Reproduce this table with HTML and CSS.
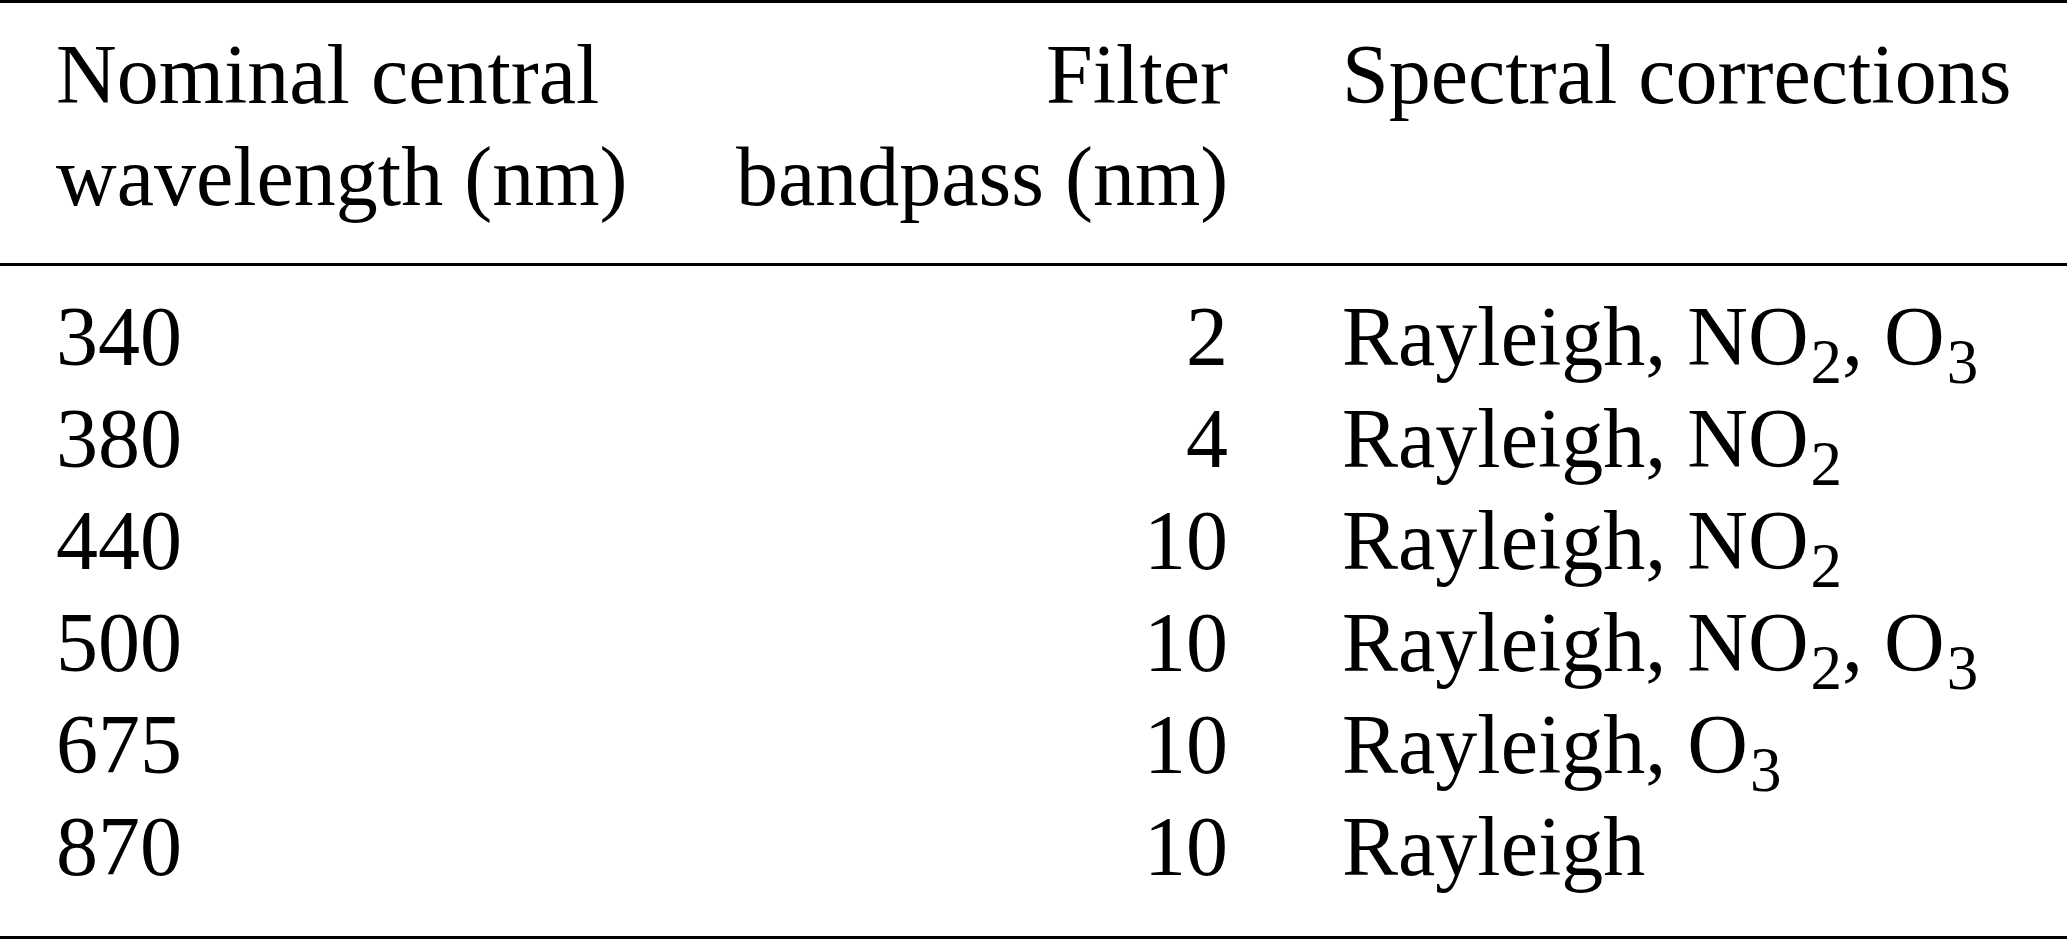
FILE: index.html
```html
<!DOCTYPE html>
<html lang="en">
<head>
  <meta charset="UTF-8">
  <meta name="viewport" content="width=device-width, initial-scale=1.0">
  <title>Sun photometer channels</title>
  <link rel="stylesheet" href="styles.css">
</head>
<body>

  <table class="channels">
    <colgroup>
      <col class="col-wave">
      <col class="col-band">
      <col class="col-corr">
    </colgroup>
    <thead>
      <tr>
        <th>Nominal central<br>wavelength (nm)</th>
        <th class="num">Filter<br>bandpass (nm)</th>
        <th>Spectral corrections</th>
      </tr>
    </thead>
    <tbody>
      <tr>
        <td>340</td>
        <td class="num">2</td>
        <td>Rayleigh, NO<sub>2</sub>, O<sub>3</sub></td>
      </tr>
      <tr>
        <td>380</td>
        <td class="num">4</td>
        <td>Rayleigh, NO<sub>2</sub></td>
      </tr>
      <tr>
        <td>440</td>
        <td class="num">10</td>
        <td>Rayleigh, NO<sub>2</sub></td>
      </tr>
      <tr>
        <td>500</td>
        <td class="num">10</td>
        <td>Rayleigh, NO<sub>2</sub>, O<sub>3</sub></td>
      </tr>
      <tr>
        <td>675</td>
        <td class="num">10</td>
        <td>Rayleigh, O<sub>3</sub></td>
      </tr>
      <tr>
        <td>870</td>
        <td class="num">10</td>
        <td>Rayleigh</td>
      </tr>
    </tbody>
  </table>

</body>
</html>
```

FILE: styles.css
```css
body {
  margin: 0;
  background-color: #fff;
  color: #000;
  font-family: "Liberation Serif", "Times New Roman", serif;
}

.channels {
  width: 100%;
  table-layout: fixed;
  border-collapse: separate;
  border-spacing: 0;
  border-top: 3px solid #000;
  border-bottom: 3px solid #000;
  font-size: 84px;
  line-height: 102px;
}

.col-wave {
  width: 678px;
}

.col-band {
  width: 606px;
}

th, td {
  padding: 0 57px 0 58px;
  text-align: left;
  vertical-align: top;
  font-weight: normal;
  white-space: nowrap;
}

th:first-child, td:first-child {
  padding-left: 56px;
}

th.num, td.num {
  text-align: right;
  padding-right: 56px;
}

th {
  padding-top: 21px;
  padding-bottom: 35px;
  border-bottom: 3px solid #000;
}

tbody tr:first-child td {
  padding-top: 20px;
}

tbody tr:last-child td {
  padding-bottom: 38px;
}

sub {
  font-size: 0.75em;
  line-height: 0;
  vertical-align: -0.29em;
  margin-left: 2px;
}
```
